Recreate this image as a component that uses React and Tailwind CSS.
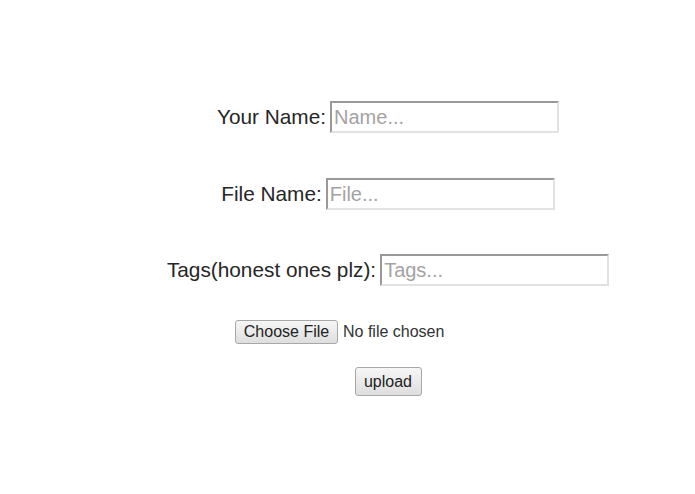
import React from 'react';

const fieldClass =
  "w-[229px] h-[32px] px-[2px] text-[20px] text-[#333] placeholder:text-[#a3a3a3] bg-white border-2 border-t-[#999] border-l-[#999] border-r-[#e2e2e2] border-b-[#e2e2e2] outline-none";

const btnClass =
  "border border-[#a8a8a8] rounded-[3px] bg-gradient-to-b from-[#f6f6f6] to-[#dedede] text-[16px] text-[#222] leading-none";

const App = () => {
  return (
    <div
      className="w-[695px] h-[494px] bg-white pl-[81px] pt-[101px] flex flex-col items-center text-[#262626]"
      style={{ fontFamily: '"Liberation Sans", Arial, sans-serif' }}
    >
      <div className="flex items-center gap-[4px]">
        <label className="text-[20.8px]">Your Name:</label>
        <input type="text" placeholder="Name..." className={fieldClass} />
      </div>

      <div className="flex items-center gap-[4px] mt-[45px]">
        <label className="text-[20.8px]">File Name:</label>
        <input type="text" placeholder="File..." className={fieldClass} />
      </div>

      <div className="flex items-center gap-[4px] mt-[44px]">
        <label className="text-[20.8px]">Tags(honest ones plz):</label>
        <input type="text" placeholder="Tags..." className={fieldClass} />
      </div>

      <div className="w-[306px] flex items-center gap-[5px] mt-[34px]">
        <button className={`${btnClass} w-[103px] h-[24px]`}>Choose File</button>
        <span className="text-[16px] text-[#333]">No file chosen</span>
      </div>

      <button className={`${btnClass} w-[67px] h-[29px] mt-[23px]`}>upload</button>
    </div>
  );
};

export default App;
